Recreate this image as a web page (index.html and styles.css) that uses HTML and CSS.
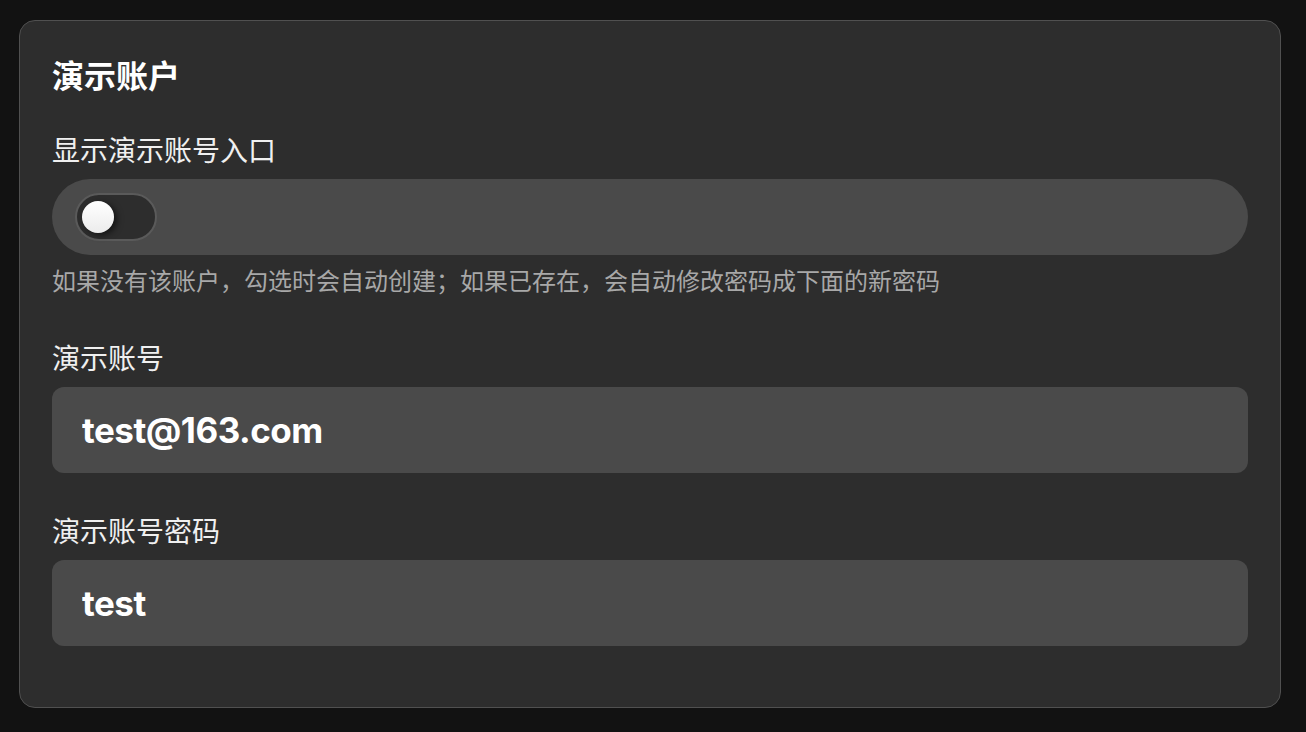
FILE: index.html
```html
<!DOCTYPE html>
<html lang="zh-CN">

<head>
  <meta charset="UTF-8">
  <meta name="viewport" content="width=device-width, initial-scale=1.0">
  <title>演示账户</title>
  <link rel="stylesheet" href="styles.css">
</head>

<body>
  <div class="card">
    <h2 class="card-title">演示账户</h2>

    <div class="field">
      <label class="field-label">显示演示账号入口</label>
      <div class="toggle-row">
        <label class="switch">
          <input type="checkbox">
          <span class="knob"></span>
        </label>
      </div>
      <p class="field-help">如果没有该账户，勾选时会自动创建；如果已存在，会自动修改密码成下面的新密码</p>
    </div>

    <div class="field">
      <label class="field-label" for="demoUser">演示账号</label>
      <input class="text-input" type="text" id="demoUser" value="test@163.com">
    </div>

    <div class="field">
      <label class="field-label" for="demoPass">演示账号密码</label>
      <input class="text-input" type="text" id="demoPass" value="test">
    </div>
  </div>
</body>

</html>
```

FILE: styles.css
```css
body {
  margin: 0;
  padding: 20px 25px 24px 19px;
  background-color: #121212;
  color: #f2f2f2;
  font-family: Inter, "Noto Sans CJK SC", sans-serif;
}

.card {
  background-color: #2d2d2d;
  border: 1px solid #505050;
  border-radius: 16px;
  padding: 32px;
}

.card-title {
  margin: 0 0 30px;
  font-size: 32px;
  line-height: 48px;
  font-weight: 700;
  color: #ffffff;
}

.field {
  display: flex;
  flex-direction: column;
  margin-bottom: 39px;
}

.field:last-child {
  margin-bottom: 29px;
}

.field-label {
  font-size: 28px;
  line-height: 40px;
  margin-bottom: 8px;
  color: #f0f0f0;
}

.toggle-row {
  height: 76px;
  background-color: #4a4a4a;
  border-radius: 38px;
  display: flex;
  align-items: center;
  padding: 0 23px;
}

.switch {
  width: 82px;
  height: 48px;
  box-sizing: border-box;
  border: 2px solid #5a5a5a;
  border-radius: 24px;
  background-color: #2d2d2d;
  display: flex;
  align-items: center;
  padding-left: 5px;
  cursor: pointer;
}

.switch input {
  display: none;
}

.knob {
  width: 32px;
  height: 32px;
  border-radius: 50%;
  background: linear-gradient(#ffffff, #ececec);
  box-shadow: 3px 2px 6px rgba(0, 0, 0, 0.55);
}

.field-help {
  margin: 9px 0 0;
  font-size: 24px;
  line-height: 36px;
  color: #a8a8a8;
}

.text-input {
  height: 86px;
  box-sizing: border-box;
  border: none;
  border-radius: 12px;
  background-color: #4a4a4a;
  color: #ffffff;
  padding: 0 30px;
  font-family: Inter, "Noto Sans CJK SC", sans-serif;
  font-size: 35px;
  letter-spacing: -0.5px;
  font-weight: 700;
  outline: none;
}
```
